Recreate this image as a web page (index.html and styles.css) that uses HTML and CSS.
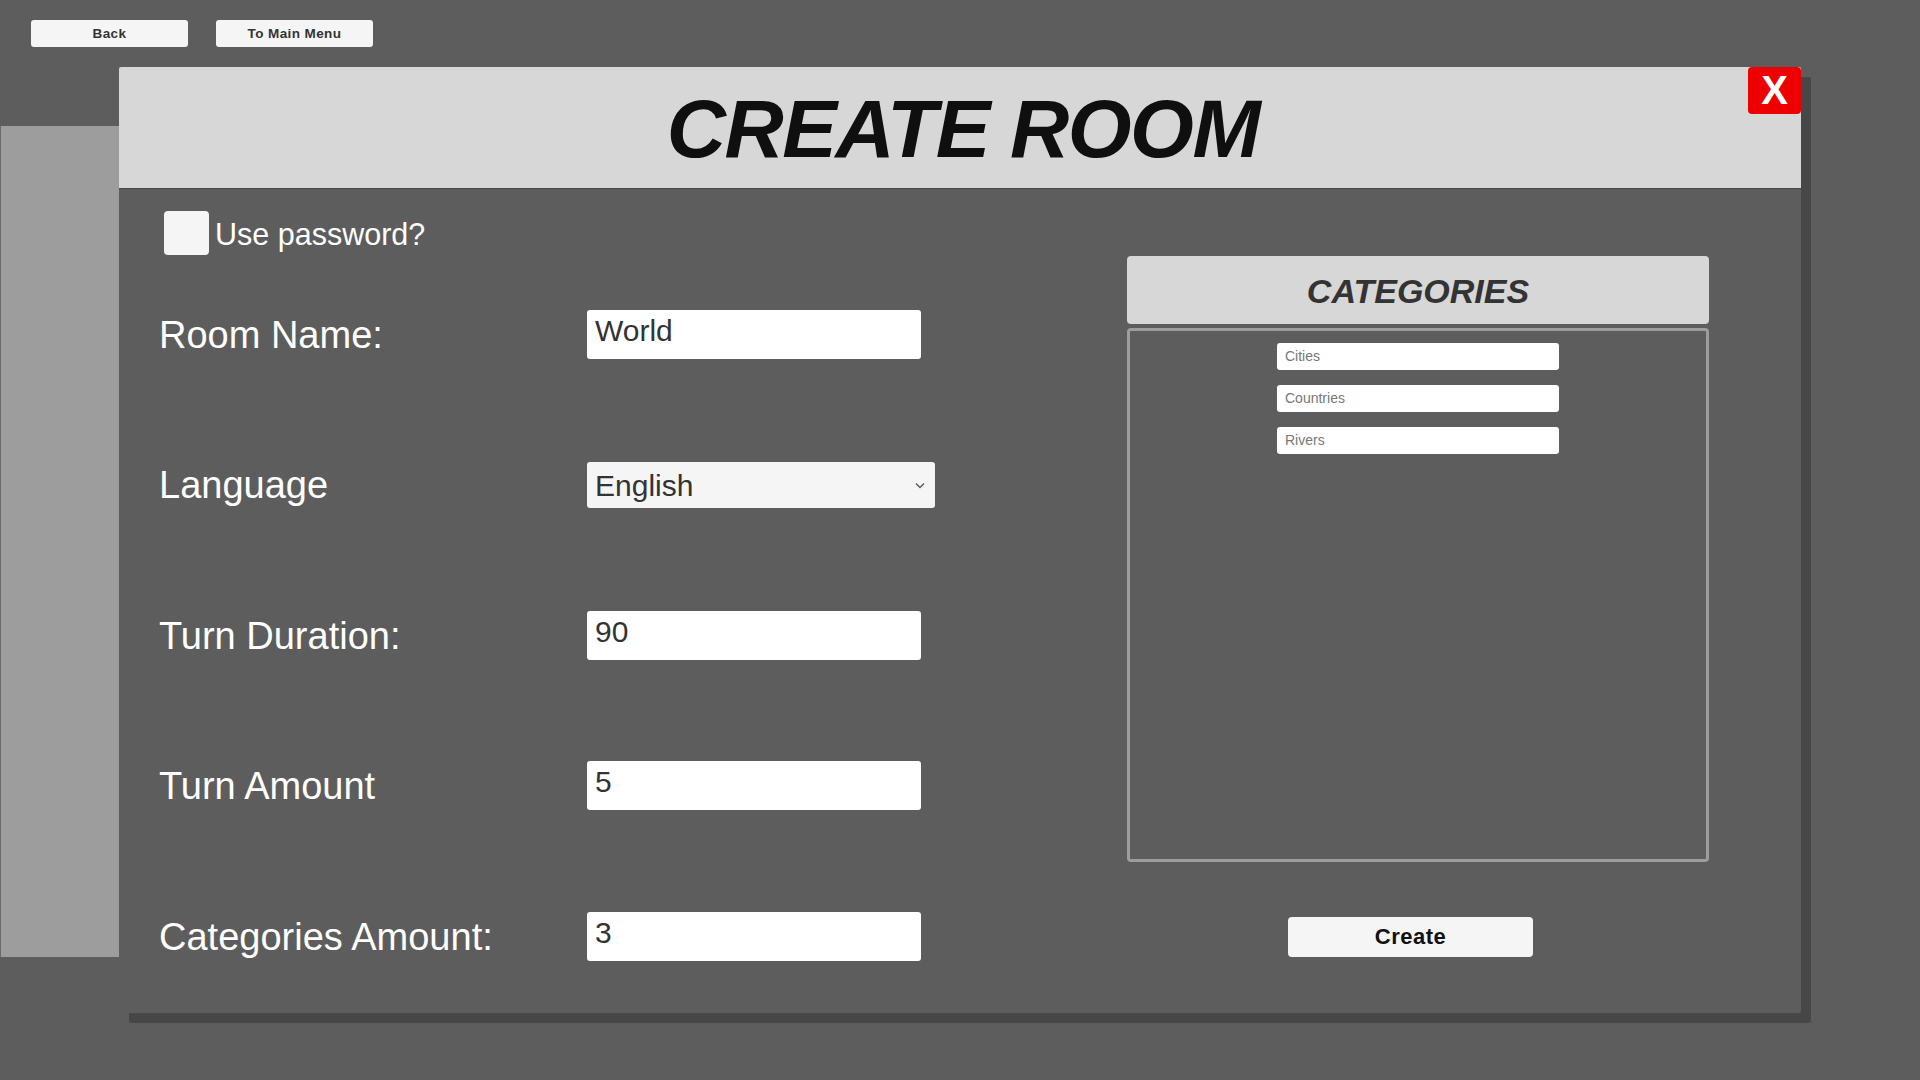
FILE: index.html
```html
<!DOCTYPE html>
<html>
<head>
<meta charset="utf-8">
<title>Create Room</title>
<link rel="stylesheet" href="styles.css">
</head>
<body>
<div class="topbar">
  <div class="navbtn">Back</div>
  <div class="navbtn">To Main Menu</div>
</div>
<div class="backpanel"></div>
<div class="dialog">
  <div class="header">
    <div class="title">CREATE ROOM</div>
    <div class="close">X</div>
  </div>
  <div class="body">
    <div class="leftcol">
      <div class="pwrow">
        <div class="checkbox"></div>
        <div class="pwlabel">Use password?</div>
      </div>
      <div class="form">
        <div class="label">Room Name:</div>
        <div class="field"><div class="input">World</div></div>
        <div class="label">Language</div>
        <div class="field"><div class="select"><span>English</span><svg class="chev" width="10" height="7" viewBox="0 0 10 7"><path d="M1 1.5 L5 5.5 L9 1.5" fill="none" stroke="#555" stroke-width="1.3"/></svg></div></div>
        <div class="label">Turn Duration:</div>
        <div class="field"><div class="input">90</div></div>
        <div class="label">Turn Amount</div>
        <div class="field"><div class="input">5</div></div>
        <div class="label">Categories Amount:</div>
        <div class="field"><div class="input">3</div></div>
      </div>
    </div>
    <div class="rightcol">
      <div class="cathead">CATEGORIES</div>
      <div class="catbox">
        <div class="catitem">Cities</div>
        <div class="catitem">Countries</div>
        <div class="catitem">Rivers</div>
      </div>
      <div class="create">Create</div>
    </div>
  </div>
</div>
</body>
</html>
```

FILE: styles.css
```css
html, body {
  margin: 0;
  padding: 0;
}
body {
  width: 1920px;
  height: 1080px;
  background: #5d5d5d;
  position: relative;
  overflow: hidden;
  font-family: "Liberation Sans", Arial, sans-serif;
}
.topbar {
  display: flex;
  gap: 28px;
  padding: 20px 0 0 31px;
}
.navbtn {
  width: 157px;
  height: 27px;
  background: #f5f5f5;
  border-radius: 3px;
  color: #333;
  font-weight: bold;
  font-size: 13.5px;
  display: flex;
  align-items: center;
  justify-content: center;
  letter-spacing: 0.4px;
}
.backpanel {
  position: absolute;
  left: 0;
  top: 126px;
  width: 118px;
  height: 831px;
  background: #9d9d9d;
  border-left: 1px solid #6a6a6a;
}
.dialog {
  position: absolute;
  left: 119px;
  top: 67px;
  width: 1682px;
  height: 946px;
  background: #5d5d5d;
  box-shadow: 10px 10px 0 #474747;
  border-radius: 2px;
}
.header {
  position: relative;
  height: 121px;
  background: #d7d7d7;
  border-bottom: 1px solid #474747;
  border-radius: 2px 2px 0 0;
  display: flex;
  align-items: center;
  justify-content: center;
}
.title {
  font-size: 82px;
  font-weight: bold;
  font-style: italic;
  color: #0f0f0f;
  letter-spacing: -1.5px;
  margin-left: 6px;
  margin-top: 2px;
}
.close {
  position: absolute;
  right: 0;
  top: 0;
  width: 53px;
  height: 47px;
  background: #ee0000;
  border-radius: 4px;
  color: #fff;
  font-weight: bold;
  font-size: 40px;
  display: flex;
  align-items: center;
  justify-content: center;
}
.body {
  display: flex;
  padding: 22px 0 0 40px;
}
.leftcol {
  width: 968px;
}
.pwrow {
  display: flex;
  align-items: center;
  height: 44px;
}
.checkbox {
  width: 45px;
  height: 44px;
  margin-left: 5px;
  background: #f5f5f5;
  border-radius: 4px;
}
.pwlabel {
  color: #fff;
  font-size: 30.5px;
  margin-left: 6px;
  margin-top: 2px;
}
.form {
  margin-top: 4px;
  display: grid;
  grid-template-columns: 428px 1fr;
  grid-auto-rows: 150.5px;
}
.label {
  color: #fff;
  font-size: 38px;
  display: flex;
  align-items: center;
  padding-top: 2px;
}
.field {
  display: flex;
  align-items: center;
}
.input {
  width: 326px;
  height: 49px;
  background: #fff;
  border-radius: 3px;
  color: #333;
  font-size: 30px;
  padding-left: 8px;
  line-height: 42px;
  box-sizing: content-box;
}
.select {
  width: 348px;
  height: 46px;
  background: #f5f5f5;
  border-radius: 3px;
  color: #333;
  font-size: 30px;
  display: flex;
  align-items: center;
  justify-content: space-between;
  padding: 0 10px 0 8px;
  box-sizing: border-box;
}
.select span {
  margin-top: 3px;
}
.chev {
  margin-top: 2px;
}
.rightcol {
  width: 582px;
  padding-top: 45px;
}
.cathead {
  height: 68px;
  background: #d7d7d7;
  border-radius: 4px;
  display: flex;
  align-items: center;
  justify-content: center;
  color: #333;
  font-size: 34px;
  font-weight: bold;
  font-style: italic;
  padding-top: 2px;
  box-sizing: border-box;
}
.catbox {
  margin-top: 4px;
  height: 534px;
  box-sizing: border-box;
  border: 3px solid #9d9d9d;
  border-radius: 4px;
  padding-top: 12px;
  display: flex;
  flex-direction: column;
  align-items: center;
  gap: 15px;
}
.catitem {
  width: 282px;
  height: 27px;
  box-sizing: border-box;
  background: #fff;
  border-radius: 3px;
  color: #777;
  font-size: 14px;
  padding-left: 8px;
  line-height: 27px;
}
.create {
  margin: 55px 0 0 161px;
  width: 245px;
  height: 40px;
  background: #f5f5f5;
  border-radius: 4px;
  color: #111;
  font-weight: bold;
  font-size: 22px;
  display: flex;
  align-items: center;
  justify-content: center;
  letter-spacing: 0.5px;
}
```
